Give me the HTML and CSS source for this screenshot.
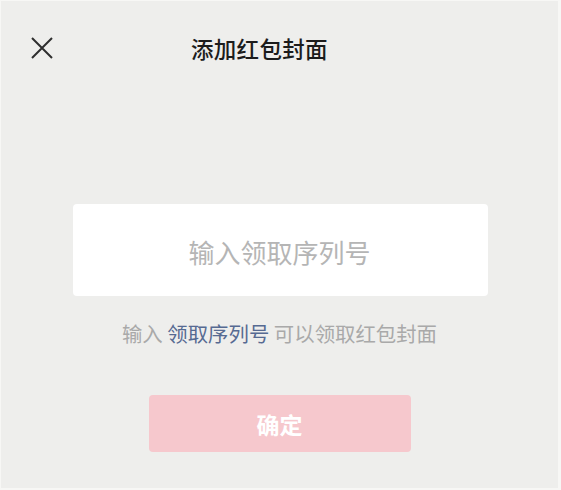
FILE: index.html
```html
<!DOCTYPE html>
<html lang="zh">
<head>
<meta charset="utf-8">
<link rel="stylesheet" href="styles.css">
</head>
<body>
<div class="page">
  <header class="nav">
    <span class="close">
      <svg width="22" height="22" viewBox="0 0 22 22"><path d="M1 1 L21 21 M21 1 L1 21" stroke="#2e2e2e" stroke-width="2" fill="none"/></svg>
    </span>
    <h1 class="title">添加红包封面</h1>
  </header>
  <main class="content">
    <div class="input-box"><span class="placeholder">输入领取序列号</span></div>
    <p class="hint">输入 <span class="link">领取序列号</span> 可以领取红包封面</p>
    <div class="btn">确定</div>
  </main>
</div>
</body>
</html>
```
FILE: styles.css
```css
html, body { margin: 0; padding: 0; }
body {
  background: #f7f7f5;
  font-family: "Noto Sans CJK SC", "Noto Sans", sans-serif;
  width: 561px;
  height: 490px;
  overflow: hidden;
}
.page {
  box-sizing: border-box;
  width: 557px;
  height: 487px;
  margin: 1px 0 0 1px;
  background: #eeeeec;
  display: flex;
  flex-direction: column;
}
.nav {
  height: 94px;
  display: flex;
  align-items: center;
}
.close {
  display: flex;
  margin-left: 30px;
  margin-top: -1px;
}
.title {
  margin: 0 0 0 138px;
  font-size: 22.5px;
  font-weight: 500;
  color: #1c1c1c;
  line-height: 32px;
  letter-spacing: 0.3px;
}
.content {
  display: flex;
  flex-direction: column;
  align-items: center;
  padding-top: 109px;
}
.input-box {
  width: 415px;
  height: 92px;
  align-self: flex-start;
  margin-left: 72px;
  background: #ffffff;
  border-radius: 4px;
  display: flex;
  align-items: center;
  justify-content: center;
}
.placeholder {
  font-size: 26px;
  color: #b5b5b5;
  margin-left: -2px;
  margin-top: 2px;
}
.hint {
  margin: 22px 0 0 0;
  font-size: 20.4px;
  line-height: 30px;
  color: #a9a9a9;
}
.link { color: #566a92; }
.btn {
  margin-top: 47px;
  width: 262px;
  height: 57px;
  border-radius: 4px;
  background: #f6c8cd;
  color: #ffffff;
  font-size: 23px;
  font-weight: 700;
  display: flex;
  align-items: center;
  justify-content: center;
}
```
